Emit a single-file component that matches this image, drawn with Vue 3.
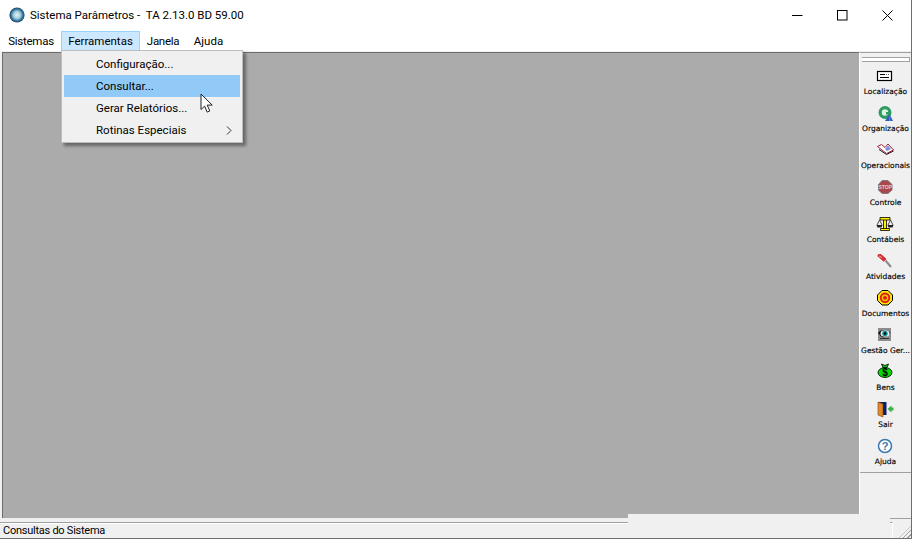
<script setup>
const menus = ['Sistemas', 'Ferramentas', 'Janela', 'Ajuda']

const menuItems = [
  { label: 'Configuração...' },
  { label: 'Consultar...', active: true },
  { label: 'Gerar Relatórios...' },
  { label: 'Rotinas Especiais', sub: true }
]

const tools = [
  { id: 'loc', label: 'Localização' },
  { id: 'org', label: 'Organização' },
  { id: 'ope', label: 'Operacionais' },
  { id: 'ctl', label: 'Controle' },
  { id: 'con', label: 'Contábeis' },
  { id: 'ati', label: 'Atividades' },
  { id: 'doc', label: 'Documentos' },
  { id: 'ges', label: 'Gestão Ger...' },
  { id: 'ben', label: 'Bens' },
  { id: 'sai', label: 'Sair' },
  { id: 'aju', label: 'Ajuda' }
]
</script>

<template>
  <div class="window">
    <header class="titlebar">
      <svg class="logo" width="16" height="16" viewBox="0 0 16 16">
        <defs>
          <radialGradient id="orb" cx="0.5" cy="0.5" r="0.55">
            <stop offset="0" stop-color="#e8f4f8" />
            <stop offset="0.45" stop-color="#9cc7d8" />
            <stop offset="0.72" stop-color="#2f6f96" />
            <stop offset="1" stop-color="#12304c" />
          </radialGradient>
        </defs>
        <circle cx="8" cy="8" r="7.6" fill="url(#orb)" />
      </svg>
      <span class="title">Sistema Parâmetros -&nbsp; TA 2.13.0 BD 59.00</span>
      <div class="controls">
        <button class="ctrl" type="button" aria-label="Minimizar">
          <svg width="11" height="11" viewBox="0 0 11 11"><path d="M0 5.5h10.500" stroke="#000" fill="none" /></svg>
        </button>
        <button class="ctrl" type="button" aria-label="Maximizar">
          <svg width="11" height="11" viewBox="0 0 11 11"><rect x="0.5" y="0.5" width="9.500" height="9.500" stroke="#000" fill="none" /></svg>
        </button>
        <button class="ctrl" type="button" aria-label="Fechar">
          <svg width="11" height="11" viewBox="0 0 11 11"><path d="M0.5 0.5l10 10M10.500 0.5l-10 10" stroke="#000" fill="none" /></svg>
        </button>
      </div>
    </header>

    <nav class="menubar">
      <span v-for="m in menus" :key="m" class="menu" :class="{ open: m === 'Ferramentas' }">{{ m }}</span>
    </nav>

    <main class="body">
      <section class="workspace"></section>

      <aside class="toolbar">
        <div class="grip"></div>
        <div v-for="t in tools" :key="t.id" class="tool">
          <svg class="tool-icon" width="20" height="20" viewBox="0 0 20 20">
            <g v-if="t.id === 'loc'">
              <rect x="2.500" y="5.500" width="14" height="9" fill="#fff" stroke="#000" stroke-width="1.200" />
              <path d="M5 8.500h5M5 11.500h9" stroke="#000" fill="none" />
              <path d="M11 8.500h3" stroke="#666" fill="none" stroke-dasharray="1 1" />
            </g>
            <g v-else-if="t.id === 'org'">
              <circle cx="10" cy="9.500" r="6.500" fill="#2f9a62" />
              <circle cx="10" cy="9.500" r="3.200" fill="#dff2e4" />
              <path d="M11 9h5v2.500h-5z" fill="#2f9a62" />
              <path d="M14.500 11l3.500 7h-8z" fill="#2c5cc0" />
              <path d="M14.500 11l1 7h-1z" fill="#7ea0e0" />
            </g>
            <g v-else-if="t.id === 'ope'">
              <path d="M2.500 6.500l9 7 7-3.500-5.500-6-3 3.500-3.500-3z" fill="#fff" stroke="#a01c30" />
              <path d="M4 9.500l7.500 5 7-3.500" fill="none" stroke="#222" />
              <path d="M13 5.500l3 3.500-4 2-2-2z" fill="#7c8fd8" />
            </g>
            <g v-else-if="t.id === 'ctl'">
              <path d="M7 3.500h6l4 4v5.500l-4 3.500H7L3.500 13V7.500z" fill="#a9474c" stroke="#7d7d7d" />
              <text class="stop" x="10.200" y="11.600" text-anchor="middle">STOP</text>
            </g>
            <g v-else-if="t.id === 'con'">
              <path d="M8.500 5h3v10h-3z" fill="#ffec00" stroke="#000" stroke-width="0.800" />
              <path d="M5 3.500h10v2.500H5z" fill="#ffec00" stroke="#000" stroke-width="0.800" />
              <path d="M5.500 14.500h9v2h-9z" fill="#ffec00" stroke="#000" stroke-width="0.800" />
              <path d="M4.500 6l-2.500 5M4.500 6l2.500 5M15.500 6L13 11M15.500 6l2.500 5" stroke="#222" stroke-width="0.800" fill="none" />
              <path d="M1.500 11h6l-1 2.500h-4zM12.500 11h6l-1 2.500h-4z" fill="#222" />
            </g>
            <g v-else-if="t.id === 'ati'">
              <path d="M2.500 5c0-2 2-2.500 4-1.500l5 4.500-2.800 2.800-4.700-4.300C3 6 2.500 5.500 2.500 5z" fill="#d42c34" />
              <path d="M4 5l3 1.500" stroke="#f5a0a0" fill="none" />
              <path d="M10.500 9.500l5.500 6.500" stroke="#8a8a8a" stroke-width="2" fill="none" />
            </g>
            <g v-else-if="t.id === 'doc'">
              <path d="M7 2.500h6l4.500 4.500v5.500L13 17H7l-4.500-4.500V7z" fill="#ffe800" stroke="#000" />
              <circle cx="10" cy="9.800" r="5.200" fill="#e01818" />
              <circle cx="10" cy="9.800" r="3.400" fill="#f5c400" />
              <circle cx="10" cy="9.800" r="1.900" fill="#e01818" />
            </g>
            <g v-else-if="t.id === 'ges'">
              <rect x="3" y="3" width="13" height="13" fill="#8c8c8c" />
              <path d="M3 8C5 4.500 12 4 15.500 7.500c-2 4.500-7.500 6-10 3.500z" fill="#111" />
              <ellipse cx="10" cy="8.500" rx="4.500" ry="3.300" fill="#e8f4f4" />
              <circle cx="10" cy="8.500" r="2.700" fill="#0f8f9c" />
              <circle cx="10" cy="8.500" r="1.200" fill="#000" />
              <path d="M5 13.500h9" stroke="#333" fill="none" />
            </g>
            <g v-else-if="t.id === 'ben'">
              <path d="M6.500 2l3.500 1.500L13.500 2 12 5.500H8z" fill="#0bd40b" stroke="#000" stroke-width="0.800" />
              <ellipse cx="10" cy="10.500" rx="7" ry="5" fill="#0bd40b" stroke="#000" stroke-width="0.800" />
              <text class="money" x="10" y="14" text-anchor="middle">$</text>
            </g>
            <g v-else-if="t.id === 'sai'">
              <rect x="3" y="3" width="8.500" height="13" fill="#0b1f6a" />
              <path d="M3 3l5 2v13l-5-2z" fill="#e08a2c" stroke="#7a4410" stroke-width="0.600" />
              <path d="M12.500 10l4-3.500v2h2v3h-2v2z" fill="#3cb043" />
            </g>
            <g v-else>
              <circle cx="10" cy="10" r="6.500" fill="#fff" stroke="#3a78b0" stroke-width="1.500" />
              <text class="help" x="10" y="14" text-anchor="middle">?</text>
            </g>
          </svg>
          <span class="tool-label">{{ t.label }}</span>
        </div>
        <div class="tool-end"></div>
      </aside>
    </main>

    <footer class="statusbar">
      <div class="status-panel">
        <span class="status-text">Consultas do Sistema</span>
      </div>
    </footer>

    <div class="repaint"></div>
    <div class="resize-grip"></div>

    <!-- dropdown aberto sobre a area de trabalho -->
    <div class="dropdown">
      <div v-for="item in menuItems" :key="item.label" class="drop-item" :class="{ active: item.active }">
        <span>{{ item.label }}</span>
        <svg v-if="item.sub" class="chevron" width="6" height="9" viewBox="0 0 6 9">
          <path d="M1 0.500l4 4-4 4" stroke="#333" fill="none" />
        </svg>
      </div>
    </div>

    <svg class="cursor" width="15" height="20" viewBox="0 0 15 20">
      <path d="M1 1v15.500l3.600-3.400 2.600 6 2.600-1.100-2.600-5.900h5z" fill="#fff" stroke="#222" stroke-width="1" />
    </svg>
  </div>
</template>

<style>
html, body { margin: 0; background: #f0f0f0; overflow: hidden; }
</style>

<style scoped>
.window {
  position: relative;
  width: 912px;
  height: 539px;
  display: flex;
  flex-direction: column;
  overflow: hidden;
  box-sizing: border-box;
  border-bottom: 1px solid #6e6e6e;
  border-right: 1px solid #6e6e6e;
  background: #f0f0f0;
  font-family: Roboto, "Noto Sans", sans-serif;
  font-size: 11.5px;
  color: #000;
}

.titlebar {
  height: 30px;
  flex: none;
  display: flex;
  align-items: center;
  background: #fff;
  padding-left: 9px;
}
.logo { margin-right: 5px; }
.title { white-space: pre; }
.controls { margin-left: auto; display: flex; padding-right: 1px; }
.ctrl {
  width: 45px;
  height: 30px;
  padding: 0;
  border: none;
  background: none;
  display: flex;
  align-items: center;
  justify-content: center;
}

.menubar {
  height: 21px;
  flex: none;
  display: flex;
  align-items: center;
  background: #fff;
  padding-left: 1px;
}
.menu {
  box-sizing: border-box;
  height: 20px;
  line-height: 18px;
  text-align: center;
  white-space: nowrap;
  border: 1px solid transparent;
}
.menu:nth-child(1) { width: 60px; letter-spacing: -0.25px; }
.menu:nth-child(2) { width: 79px; }
.menu:nth-child(3) { width: 46px; letter-spacing: -0.3px; }
.menu:nth-child(4) { width: 45px; }
.menu.open { background: #cce8ff; border-color: #99d1ff; }

.body {
  flex: 1;
  min-height: 0;
  display: flex;
  background: #f0f0f0;
  padding: 1px 0 0 2px;
}
.workspace {
  flex: 1;
  margin-bottom: 4px;
  background: #ababab;
  border-top: 1px solid #6d6d6d;
  border-left: 1px solid #6d6d6d;
}
.toolbar {
  box-sizing: border-box;
  width: 52px;
  flex: none;
  display: flex;
  flex-direction: column;
  align-items: center;
  border-left: 1px solid #fff;
  border-top: 1px solid #a0a0a0;
  border-bottom: 1px solid #a0a0a0;
  margin-bottom: 3px;
  padding-top: 4px;
}
.grip {
  width: 47px;
  height: 3px;
  flex: none;
  border-top: 1px solid #a0a0a0;
  border-bottom: 1px solid #a0a0a0;
  border-right: 1px solid #a0a0a0;
  background: #fff;
  margin-bottom: 4px;
}
.tool {
  width: 100%;
  height: 37px;
  flex: none;
  display: flex;
  flex-direction: column;
  align-items: center;
}
.tool-icon { flex: none; margin-left: -1px; }
.tool-label {
  font-family: "DejaVu Sans", sans-serif;
  font-size: 7.5px;
  line-height: 11px;
  white-space: nowrap;
  -webkit-text-stroke: 0.15px #000;
}
.tool-end {
  width: 100%;
  margin-top: -1px;
  border-top: 1px solid #a0a0a0;
}
.stop { font: bold 5px "Liberation Sans", sans-serif; fill: #e8d0d0; }
.money { font: bold 10px "Liberation Sans", sans-serif; fill: #000; }
.help { font: bold 11px "Liberation Sans", sans-serif; fill: #3a78b0; }

.statusbar {
  height: 16px;
  flex: none;
  display: flex;
}
.status-panel {
  box-sizing: border-box;
  width: 893px;
  display: flex;
  align-items: center;
  padding-left: 3px;
  border-top: 1px solid #a0a0a0;
  border-right: 1px solid #fff;
  box-shadow: inset 0 1px 0 #fff;
}
.status-text { font-size: 11px; line-height: 15px; letter-spacing: -0.25px; color: #000; }

/* areas que ficaram sem repintar na captura */
.repaint {
  position: absolute;
  left: 628px;
  top: 514px;
  width: 262px;
  height: 24px;
  background: #f0f0f0;
}
.resize-grip {
  position: absolute;
  right: 0;
  bottom: 0;
  width: 12px;
  height: 12px;
  background: repeating-linear-gradient(135deg, #f0f0f0 0 2px, #a0a0a0 2px 3px);
  clip-path: polygon(100% 0, 100% 100%, 0 100%);
}

.dropdown {
  position: absolute;
  left: 61px;
  top: 50px;
  width: 182px;
  height: 93px;
  box-sizing: border-box;
  padding: 2px;
  background: #f0f0f0;
  border: 1px solid #bdbdbd;
  box-shadow: 3px 3px 3px rgba(0, 0, 0, 0.4);
}
.drop-item {
  height: 22px;
  display: flex;
  align-items: center;
  justify-content: space-between;
  padding: 0 8px 0 32px;
}
.drop-item.active { background: #91c9f7; }
.chevron { flex: none; }
.cursor { position: absolute; left: 200px; top: 93px; }
</style>
